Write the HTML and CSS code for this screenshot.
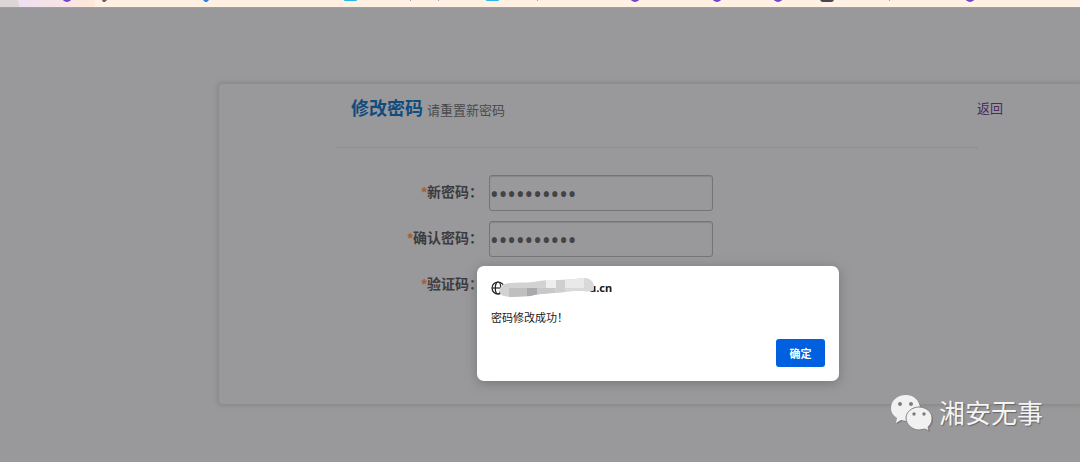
FILE: index.html
```html
<!DOCTYPE html>
<html lang="zh-CN">
<head>
<meta charset="utf-8">
<title>修改密码</title>
<link rel="stylesheet" href="styles.css">
</head>
<body>
<div class="bookmarks" aria-hidden="true">
  <svg width="1080" height="7" viewBox="0 0 1080 7">
    <defs><linearGradient id="tint"><stop offset="0" stop-color="#eedff2"/><stop offset="1" stop-color="#ffe8da"/></linearGradient></defs>
    <path d="M0 0H18L20 7H0z" fill="#dcd7d6"/>
    <path d="M18 0H95V7H20z" fill="url(#tint)"/>
    <g fill="#7044cf"><circle cx="67" cy="-3" r="5"/><circle cx="635" cy="-3" r="5"/><circle cx="717" cy="-3" r="5"/><circle cx="778" cy="-3" r="5"/><circle cx="970" cy="-3" r="5"/></g>
    <g fill="#29b8e8"><rect x="344" y="-6" width="13" height="7" rx="1"/><rect x="486" y="-6" width="13" height="7" rx="1"/></g>
    <path d="M203 0h6l-2 2h-2z" fill="#2583e5"/>
    <path d="M102 0h5l-2 2h-2z" fill="#775762"/>
    <rect x="820" y="-5" width="14" height="7" rx="3" fill="#48464a"/>
    <g fill="#a99bab"><rect x="410" width="1" height="1"/><rect x="438" width="1" height="1"/><rect x="537" width="1" height="1"/><rect x="889" width="1" height="1"/></g>
  </svg>
</div>
<main class="page">
  <section class="panel">
    <header class="head">
      <div class="heading">
        <h1 class="title">修改密码</h1>
        <span class="subtitle">请重置新密码</span>
      </div>
      <a class="back" href="#">返回</a>
    </header>
    <form class="form">
      <label class="label" for="new-pw"><span class="star">*</span>新密码：</label>
      <input class="field" id="new-pw" type="password" value="abcdefghij">
      <label class="label" for="confirm-pw"><span class="star">*</span>确认密码：</label>
      <input class="field" id="confirm-pw" type="password" value="abcdefghij">
      <label class="label" for="code"><span class="star">*</span>验证码：</label>
      <input class="field" id="code" type="text">
    </form>
  </section>
</main>
<div class="dialog" role="alertdialog" aria-labelledby="origin" aria-describedby="message">
  <div class="origin">
    <svg class="globe" width="14" height="14" viewBox="0 0 14 14" fill="none" stroke="#222226" stroke-width="1.2"><circle cx="7" cy="7" r="6"/><ellipse cx="7" cy="7" rx="2.7" ry="6"/><path d="M1 7h12"/></svg>
    <span class="host" id="origin">u.cn</span>
    <svg class="smudge" width="96" height="20" viewBox="0 0 96 20">
      <defs><clipPath id="brush"><path d="M3 7C12 3 27 6 40 3C52 1 65 3 83 0C92-1 97 6 94 13C85 14 76 12 66 14C50 16 40 15 32 18C21 18 13 20 5 18C0 17-1 12 3 7z"/></clipPath></defs>
      <g clip-path="url(#brush)"><path fill="#d2d2d3" d="M0 0h96v20H0z"/><path fill="#bfbfc0" d="M10 10h18v10H10z"/><path fill="#aaa9ac" d="M28 10h10v10H28z"/><path fill="#c8c8ca" d="M38 10h18v10H38z"/><path fill="#eeeeef" d="M47 0h10v10H47z"/><path fill="#cfcfd0" d="M57 2h9v14h-9z"/><path fill="#e9e9ea" d="M66 0h19v10H66z"/><path fill="#d9d9da" d="M66 10h19v8H66zM85 0h11v14H85z"/></g>
    </svg>
  </div>
  <p class="message" id="message">密码修改成功！</p>
  <button class="ok" type="button">确定</button>
</div>
<div class="watermark">
  <svg width="42" height="38" viewBox="0 0 42 38">
    <g fill="#747476" transform="translate(1 1)"><path d="M15 0C6 0 0 6 0 13C0 18 3 21 6 23L5 28L10 25L15 26C24 26 29 20 29 13S23 0 15 0z"/><path d="M28 12C21 12 16 17 16 23S21 34 28 34L34 33L38 36L37 32C40 29 41 27 41 23C41 17 35 12 28 12z"/></g>
    <path fill="#f1f1f1" d="M15 0C6 0 0 6 0 13C0 18 3 21 6 23L5 28L10 25L15 26C24 26 29 20 29 13S23 0 15 0z"/>
    <path fill="#f1f1f1" stroke="#858587" d="M28 12C21 12 15 17 15 23S21 35 28 35L34 34L38 36L37 32C40 29 41 27 41 23C41 17 35 12 28 12z"/>
    <g fill="#7c7c7e"><circle cx="9" cy="9" r="2"/><circle cx="20" cy="9" r="2"/><circle cx="23" cy="19" r="1.7"/><circle cx="33" cy="19" r="1.7"/></g>
  </svg>
  <span>湘安无事</span>
</div>
</body>
</html>
```
FILE: styles.css
```css
* { box-sizing: border-box; }
body {
  margin: 0;
  min-height: 100vh;
  overflow: hidden;
  background: #99999b;
  color: #3c3c40;
  font-family: "Liberation Sans", "Noto Sans CJK SC", sans-serif;
  font-size: 14px;
}
.bookmarks {
  height: 8px;
  overflow: hidden;
  background: #fff0e4;
  border-bottom: 1px solid #b09a8f;
}
.bookmarks svg { display: block; }
.page { padding: 76px 0 58px 219px; }
.panel {
  min-height: 320px;
  padding-left: 118px;
  border-radius: 3px 0 0 3px;
  box-shadow: 0 0 5px 1px #828285;
}
.head {
  display: flex;
  width: 666px;
  height: 64px;
  padding-top: 13px;
}
.heading {
  display: flex;
  flex: 1;
  align-items: baseline;
  gap: 4px;
  padding-left: 14px;
  border-bottom: 1px dotted #868688;
}
.title {
  margin: 0;
  color: #114c7e;
  font-size: 18px;
  line-height: 24px;
}
.subtitle { color: #4a4a4d; font-size: 13px; line-height: 24px; }
.back {
  color: #4b2963;
  font-size: 13px;
  line-height: 24px;
  text-decoration: none;
}
.form {
  display: grid;
  grid-template-columns: 146px 224px;
  gap: 10px 6px;
  padding-top: 27px;
}
.label {
  font-weight: bold;
  line-height: 34px;
  text-align: right;
}
.star { color: #b05c1c; }
.field {
  width: 100%;
  height: 36px;
  padding: 2px 0 0;
  border: 1px solid #757578;
  border-radius: 3px;
  background: transparent;
  box-shadow: inset 0 1px 1px #858588;
  color: #434347;
  font-family: "Noto Sans", sans-serif;
  font-size: 23px;
}
.dialog {
  position: absolute;
  top: 266px;
  left: 477px;
  display: flex;
  flex-direction: column;
  width: 362px;
  padding: 14px;
  border-radius: 7px;
  background: #fff;
  box-shadow: 0 2px 12px #77777a;
  color: #18181b;
  font-size: 11px;
}
.origin {
  position: relative;
  display: flex;
  align-items: center;
  gap: 84px;
  height: 15px;
  font-family: "Noto Sans", sans-serif;
  font-weight: bold;
}
.smudge { position: absolute; top: -2px; left: 8px; }
.message { margin: 15px 0 13px; line-height: 16px; }
.ok {
  align-self: flex-end;
  width: 49px;
  height: 28px;
  padding: 0;
  border: 0;
  border-radius: 3px;
  background: #0060df;
  color: #fff;
  font: bold 11px "Liberation Sans", "Noto Sans CJK SC", sans-serif;
}
.watermark {
  position: absolute;
  top: 395px;
  right: 37px;
  display: flex;
  align-items: center;
  gap: 6px;
  color: #f4f4f4;
  font-size: 26px;
  line-height: 38px;
  text-shadow: 1px 1px 1px #666668;
}
```
